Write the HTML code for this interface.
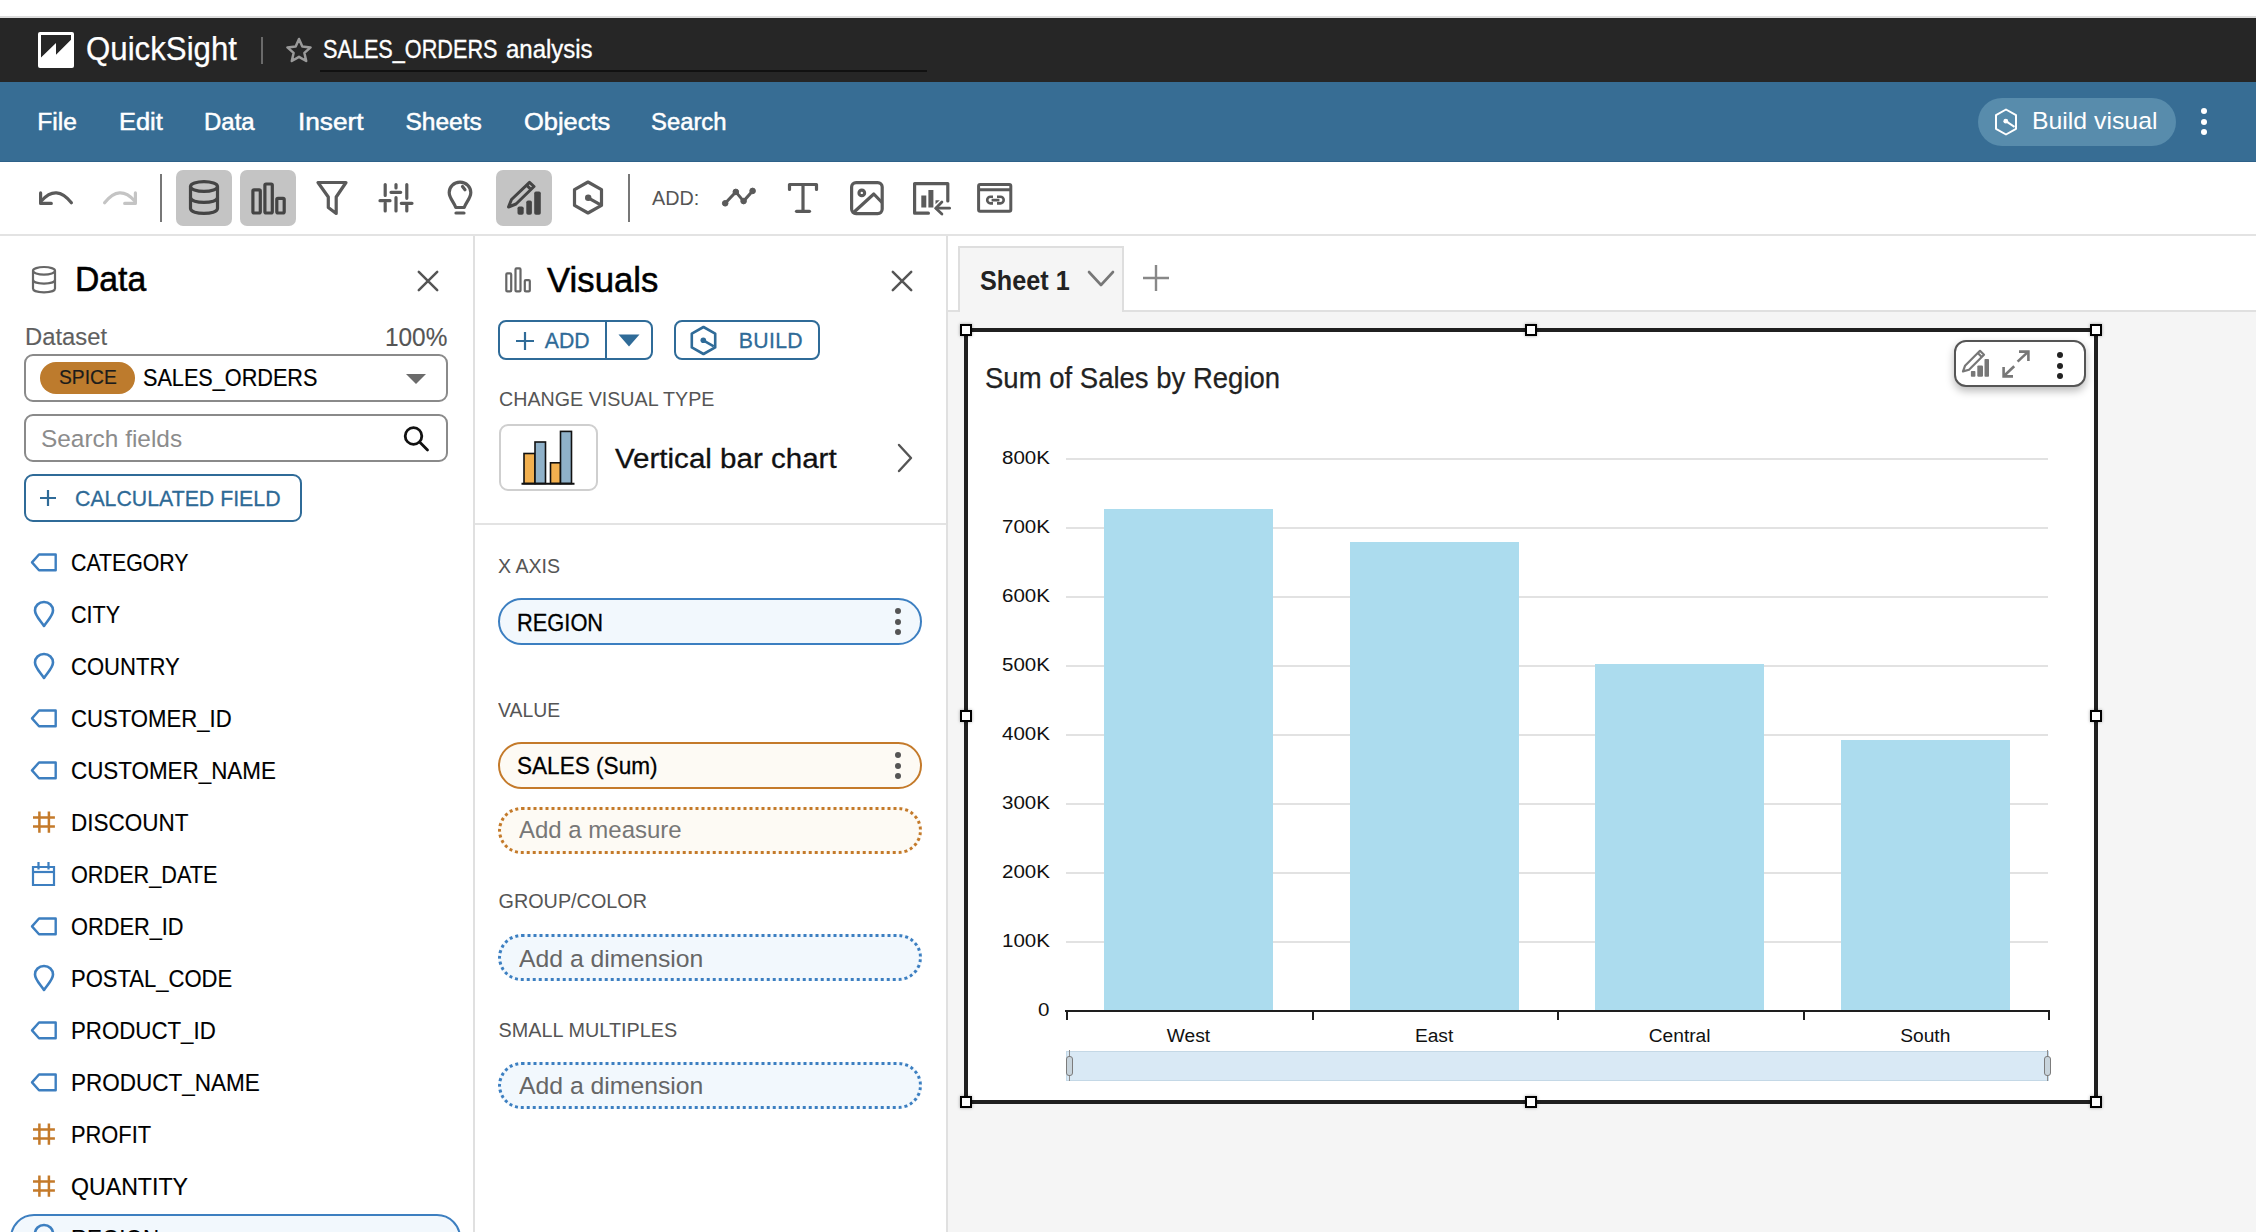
<!DOCTYPE html>
<html><head><meta charset="utf-8"><title>QuickSight</title>
<style>
html,body{margin:0;padding:0;}
body{width:2256px;height:1232px;overflow:hidden;position:relative;background:#fff;font-family:"Liberation Sans",sans-serif;}
.t{position:absolute;line-height:1;white-space:nowrap;transform-origin:0 50%;}
svg{overflow:visible}
</style></head><body>
<div style="position:absolute;left:0px;top:16px;width:2256px;height:2px;background:#dcdcdc"></div>
<div style="position:absolute;left:0px;top:18px;width:2256px;height:64px;background:#262626"></div>
<div style="position:absolute;left:0px;top:82px;width:2256px;height:80px;background:#376d94"></div>
<div style="position:absolute;left:0px;top:161px;width:2256px;height:1px;background:#2d6189"></div>
<div style="position:absolute;left:0px;top:234px;width:2256px;height:2px;background:#e3e3e3"></div>
<div style="position:absolute;left:473px;top:236px;width:2px;height:996px;background:#e0e0e0"></div>
<div style="position:absolute;left:946px;top:236px;width:2px;height:996px;background:#e0e0e0"></div>
<div style="position:absolute;left:475px;top:523px;width:471px;height:2px;background:#e3e3e3"></div>
<div style="position:absolute;left:948px;top:312px;width:1308px;height:920px;background:#f5f5f5"></div>
<div style="position:absolute;left:948px;top:310px;width:1308px;height:2px;background:#e0e0e0"></div>
<svg style="position:absolute;left:38px;top:32px;" width="36" height="36" viewBox="0 0 36 36"><rect x="0" y="0" width="36" height="36" rx="2" fill="#fff"/><path d="M3 3 H33 V7.8 L18 22.8 V11 L3 25.6 Z" fill="#262626"/></svg>
<div class="t" style="left:86.0px;top:32.3px;font-size:33.72px;color:#fff;-webkit-text-stroke:0.25px #fff;transform:scaleX(0.926);">QuickSight</div>
<div style="position:absolute;left:261px;top:37px;width:2px;height:27px;background:#6a6a6a"></div>
<svg style="position:absolute;left:285px;top:37px;" width="28" height="26" viewBox="0 0 28 26"><path d="M14 2 L17.3 9.6 L25.6 10.4 L19.4 15.9 L21.2 24 L14 19.8 L6.8 24 L8.6 15.9 L2.4 10.4 L10.7 9.6 Z" fill="none" stroke="#9a9a9a" stroke-width="2.5" stroke-linejoin="round"/></svg>
<div class="t" style="left:323.0px;top:37.2px;font-size:24.86px;color:#fff;-webkit-text-stroke:0.35px #fff;transform:scaleX(0.871);">SALES_ORDERS</div>
<div class="t" style="left:506.0px;top:37.2px;font-size:24.86px;color:#fff;-webkit-text-stroke:0.35px #fff;transform:scaleX(0.964);">analysis</div>
<div style="position:absolute;left:320px;top:70px;width:607px;height:2px;background:#111"></div>
<div class="t" style="left:37.3px;top:110.1px;font-size:24.56px;color:#fff;-webkit-text-stroke:0.5px #fff;">File</div>
<div class="t" style="left:118.5px;top:110.1px;font-size:24.56px;color:#fff;-webkit-text-stroke:0.5px #fff;transform:scaleX(1.035);">Edit</div>
<div class="t" style="left:204.4px;top:110.1px;font-size:24.56px;color:#fff;-webkit-text-stroke:0.5px #fff;transform:scaleX(0.977);">Data</div>
<div class="t" style="left:298.4px;top:110.1px;font-size:24.56px;color:#fff;-webkit-text-stroke:0.5px #fff;transform:scaleX(1.068);">Insert</div>
<div class="t" style="left:405.4px;top:110.1px;font-size:24.56px;color:#fff;-webkit-text-stroke:0.5px #fff;">Sheets</div>
<div class="t" style="left:523.7px;top:110.1px;font-size:24.56px;color:#fff;-webkit-text-stroke:0.5px #fff;transform:scaleX(1.036);">Objects</div>
<div class="t" style="left:651.0px;top:110.1px;font-size:24.56px;color:#fff;-webkit-text-stroke:0.5px #fff;transform:scaleX(0.971);">Search</div>
<div style="position:absolute;left:1978px;top:98px;width:198px;height:48px;background:#588cac;border-radius:24px"></div>
<svg style="position:absolute;left:1994px;top:108px;" width="24" height="28" viewBox="0 0 24 28"><path d="M12 1.5 L22 7.2 V20.8 L12 26.5 L2 20.8 V7.2 Z" fill="none" stroke="#fff" stroke-width="2" stroke-linejoin="round"/><circle cx="11.8" cy="13.2" r="2.4" fill="#fff"/><path d="M11.8 13.2 L20.5 18.8" stroke="#fff" stroke-width="2"/></svg>
<div class="t" style="left:2031.5px;top:109.7px;font-size:23.26px;color:#fff;transform:scaleX(1.067);">Build visual</div>
<div style="position:absolute;left:2201px;top:108px;width:6px;height:6px;background:#fff;border-radius:50%"></div>
<div style="position:absolute;left:2201px;top:118.8px;width:6px;height:6px;background:#fff;border-radius:50%"></div>
<div style="position:absolute;left:2201px;top:129.3px;width:6px;height:6px;background:#fff;border-radius:50%"></div>
<svg style="position:absolute;left:36px;top:188px;" width="40" height="20" viewBox="0 0 40 20"><path d="M4.6 4.9 V15.4 H15.3" fill="none" stroke="#5a5a5a" stroke-width="3.2" stroke-linecap="round" stroke-linejoin="round"/><path d="M5.5 12.8 Q 20.5 -4, 35.4 14.8" fill="none" stroke="#5a5a5a" stroke-width="3.2" stroke-linecap="round"/></svg>
<svg style="position:absolute;left:100px;top:188px;" width="40" height="20" viewBox="0 0 40 20"><g transform="translate(40,0) scale(-1,1)"><path d="M4.6 4.9 V15.4 H15.3" fill="none" stroke="#c4c4c4" stroke-width="3.2" stroke-linecap="round" stroke-linejoin="round"/><path d="M5.5 12.8 Q 20.5 -4, 35.4 14.8" fill="none" stroke="#c4c4c4" stroke-width="3.2" stroke-linecap="round"/></g></svg>
<div style="position:absolute;left:160px;top:174px;width:2px;height:48px;background:#777"></div>
<div style="position:absolute;left:176px;top:170px;width:56px;height:56px;background:#c4c4c4;border-radius:7px"></div>
<div style="position:absolute;left:240px;top:170px;width:56px;height:56px;background:#c4c4c4;border-radius:7px"></div>
<div style="position:absolute;left:496px;top:170px;width:56px;height:56px;background:#c4c4c4;border-radius:7px"></div>
<svg style="position:absolute;left:188px;top:180px;" width="32" height="36" viewBox="0 0 32 36"><g fill="none" stroke="#444" stroke-width="3.2"><ellipse cx="16" cy="6.5" rx="13.5" ry="4.8"/><path d="M2.5 6.5 V28.5 C2.5 35, 29.5 35, 29.5 28.5 V6.5"/><path d="M2.5 17.5 C2.5 24, 29.5 24, 29.5 17.5"/></g></svg>
<svg style="position:absolute;left:250px;top:180px;" width="36" height="36" viewBox="0 0 36 36"><g fill="none" stroke="#444" stroke-width="3.2" stroke-linejoin="round"><rect x="2.9" y="9.9" width="7.4" height="23.1" rx="1.2"/><rect x="14.9" y="4" width="7.4" height="29" rx="1.2"/><rect x="26.8" y="18.3" width="7.4" height="14.7" rx="1.2"/></g></svg>
<svg style="position:absolute;left:316px;top:180px;" width="32" height="36" viewBox="0 0 32 36"><path d="M2 2.5 H30 L20.2 17 V33.5 L12.3 27.5 V17 Z" fill="none" stroke="#5a5a5a" stroke-width="3.2" stroke-linejoin="round"/></svg>
<svg style="position:absolute;left:378px;top:182px;" width="36" height="32" viewBox="0 0 36 32"><g stroke="#5a5a5a" stroke-width="3.2" stroke-linecap="round"><path d="M7.2 2.5 V13.5 M7.2 21 V29 M2 18.7 H12"/><path d="M18 2.5 V6 M18 15.5 V29 M13 10.3 H22.7"/><path d="M28.8 2.5 V16.3 M28.8 23.5 V29 M23.3 21.3 H34"/></g></svg>
<svg style="position:absolute;left:446px;top:179px;" width="28" height="38" viewBox="0 0 28 38"><g fill="none" stroke="#5a5a5a" stroke-width="3.2" stroke-linecap="round" stroke-linejoin="round"><path d="M14 3.2 C 7.5 3.2, 3.2 8, 3.2 13.5 C 3.2 19, 8 23.5, 9.8 28.5 H18.2 C 20 23.5, 24.8 19, 24.8 13.5 C 24.8 8, 20.5 3.2, 14 3.2 Z"/><path d="M10 34 H18"/><path d="M16.5 7.5 L19 10.8"/></g></svg>
<svg style="position:absolute;left:506px;top:180px;" width="38" height="38" viewBox="0 0 38 38"><g fill="none" stroke="#444" stroke-width="3" stroke-linejoin="round"><path d="M2.5 27 L5.5 19.5 L23.5 2.3 L28 6.5 L10 24 Z"/><path d="M20.5 5.2 L25 9.5"/></g><g fill="#444"><rect x="11.5" y="26.5" width="6.2" height="8.2" rx="1.8"/><rect x="20.3" y="20.5" width="5.6" height="14.2" rx="1.8"/><rect x="28.2" y="11.5" width="6.6" height="23.2" rx="1.8"/></g></svg>
<svg style="position:absolute;left:572px;top:180px;" width="32" height="36" viewBox="0 0 32 36"><path d="M16 2 L29.5 9.6 V25.4 L16 33 L2.5 25.4 V9.6 Z" fill="none" stroke="#5a5a5a" stroke-width="3.2" stroke-linejoin="round"/><circle cx="16.2" cy="17.8" r="3.2" fill="#5a5a5a"/><path d="M16.2 17.8 L28.3 24.6" stroke="#5a5a5a" stroke-width="3.2"/></svg>
<div style="position:absolute;left:628px;top:174px;width:2px;height:48px;background:#777"></div>
<div class="t" style="left:652.0px;top:188.5px;font-size:19.77px;color:#555;">ADD:</div>
<svg style="position:absolute;left:720px;top:186px;" width="38" height="22" viewBox="0 0 38 22"><g stroke="#5a5a5a" fill="#5a5a5a"><path d="M5.2 17.3 L15.8 5.9 L23.6 15.1 L32.6 4.9" fill="none" stroke-width="3"/><circle cx="5.2" cy="17.3" r="2.8"/><circle cx="15.8" cy="5.9" r="2.8"/><circle cx="23.6" cy="15.1" r="2.8"/><circle cx="32.6" cy="4.9" r="2.8"/></g></svg>
<svg style="position:absolute;left:786px;top:181px;" width="34" height="34" viewBox="0 0 34 34"><g fill="none" stroke="#5a5a5a" stroke-width="3.2" stroke-linecap="round" stroke-linejoin="round"><path d="M3.5 8.5 V3.5 H30.5 V8.5"/><path d="M17 3.5 V30.3"/><path d="M10.5 30.3 H23.5"/></g></svg>
<svg style="position:absolute;left:849px;top:180px;" width="36" height="36" viewBox="0 0 36 36"><g fill="none" stroke="#5a5a5a" stroke-width="3.2" stroke-linejoin="round"><rect x="2.6" y="2.6" width="30.6" height="31" rx="4.5"/><circle cx="12.8" cy="12.9" r="2.8"/><path d="M4 33 L24.8 14 L33 22.5"/></g></svg>
<svg style="position:absolute;left:912px;top:181px;" width="40" height="36" viewBox="0 0 40 36"><g fill="none" stroke="#5a5a5a" stroke-width="3.2" stroke-linejoin="round" stroke-linecap="round"><path d="M16.4 32.2 H2.6 V2.6 H35.8 V20"/><path d="M24 27.2 H37.6" stroke-width="2.8"/><path d="M29.9 21 L23.8 27.2 L29.9 33" stroke-width="2.8"/></g><g fill="#5a5a5a"><rect x="9.3" y="14.5" width="5" height="12"/><rect x="16.4" y="9" width="5" height="17.5"/><path d="M23.5 19.2 L27.8 19.2 L23.5 23.2 Z"/></g></svg>
<svg style="position:absolute;left:976px;top:182px;" width="38" height="32" viewBox="0 0 38 32"><g fill="none" stroke="#5a5a5a" stroke-width="3" stroke-linejoin="round"><rect x="2.6" y="2.6" width="32.2" height="26.6" rx="1.5"/><path d="M2.6 7.8 H34.8"/><path d="M17 14.8 H14.5 A3.3 3.3 0 0 0 14.5 21.4 H17 M21 14.8 H24.4 A3.3 3.3 0 0 1 24.4 21.4 H21 M15.6 18.1 H23.4" stroke-width="2.6"/></g></svg>
<svg style="position:absolute;left:31px;top:265px;" width="26" height="30" viewBox="0 0 26 30"><g fill="none" stroke="#666" stroke-width="2.2"><ellipse cx="13" cy="5.8" rx="11" ry="3.8"/><path d="M2 5.8 V23.5 C2 28.6, 24 28.6, 24 23.5 V5.8"/><path d="M2 14.7 C2 19.8, 24 19.8, 24 14.7"/></g></svg>
<div class="t" style="left:75.0px;top:262.3px;font-size:35.76px;color:#000;-webkit-text-stroke:0.55px #000;transform:scaleX(0.943);">Data</div>
<svg style="position:absolute;left:414px;top:267px;" width="28" height="28" viewBox="0 0 28 28"><path d="M4.8 4.8 L23.2 23.2 M23.2 4.8 L4.8 23.2" stroke="#555" stroke-width="2.5" stroke-linecap="round"/></svg>
<div class="t" style="left:25.2px;top:325.9px;font-size:23.11px;color:#5f5f5f;-webkit-text-stroke:0.15px #5f5f5f;transform:scaleX(1.030);">Dataset</div>
<div class="t" style="left:385.0px;top:325.0px;font-size:24.86px;color:#555;-webkit-text-stroke:0.15px #555;transform:scaleX(0.980);">100%</div>
<div style="position:absolute;left:24px;top:354px;width:424px;height:48px;box-sizing:border-box;border:2px solid #8a8a8a;border-radius:9px;background:#fff"></div>
<div style="position:absolute;left:40px;top:362px;width:95px;height:32px;background:#bd7b2d;border-radius:16px"></div>
<div class="t" style="left:58.7px;top:367.1px;font-size:20.93px;color:#1b1b1b;-webkit-text-stroke:0.2px #1b1b1b;transform:scaleX(0.919);">SPICE</div>
<div class="t" style="left:143.4px;top:365.5px;font-size:24.13px;color:#000;-webkit-text-stroke:0.2px #000;transform:scaleX(0.897);">SALES_ORDERS</div>
<svg style="position:absolute;left:404px;top:372px;" width="24" height="14" viewBox="0 0 24 14"><path d="M2 2 H22 L12 12 Z" fill="#6b6b6b"/></svg>
<div style="position:absolute;left:24px;top:414px;width:424px;height:48px;box-sizing:border-box;border:2px solid #8a8a8a;border-radius:9px;background:#fff"></div>
<div class="t" style="left:40.5px;top:426.6px;font-size:24.13px;color:#8c8c8c;transform:scaleX(1.012);">Search fields</div>
<svg style="position:absolute;left:402px;top:424px;" width="28" height="30" viewBox="0 0 28 30"><g fill="none" stroke="#111" stroke-width="2.8" stroke-linecap="round"><circle cx="11.5" cy="12" r="8.3"/><path d="M17.6 18.1 L25.5 26"/></g></svg>
<div style="position:absolute;left:24px;top:474px;width:278px;height:48px;box-sizing:border-box;border:2px solid #2f6b98;border-radius:9px;background:#fff"></div>
<svg style="position:absolute;left:38px;top:488px;" width="20" height="20" viewBox="0 0 20 20"><path d="M10 2 V18 M2 10 H18" stroke="#2f6b98" stroke-width="2.2"/></svg>
<div class="t" style="left:75.0px;top:487.0px;font-size:22.67px;color:#2e6a96;-webkit-text-stroke:0.3px #2e6a96;transform:scaleX(0.940);">CALCULATED FIELD</div>
<svg style="position:absolute;left:30px;top:551.7px;" width="28" height="22" viewBox="0 0 28 22"><path d="M9 2.5 H25.7 V18.3 H9 L2 10.4 Z" fill="none" stroke="#3d7fc0" stroke-width="2.4" stroke-linejoin="round"/></svg>
<div class="t" style="left:71.2px;top:550.8px;font-size:24.13px;color:#000;-webkit-text-stroke:0.15px #000;transform:scaleX(0.883);">CATEGORY</div>
<svg style="position:absolute;left:33px;top:599.7px;" width="22" height="30" viewBox="0 0 22 30"><path d="M11 2 C 5.8 2, 2 5.8, 2 10.4 C 2 15.5, 7.5 20.5, 11 26 C 14.5 20.5, 20 15.5, 20 10.4 C 20 5.8, 16.2 2, 11 2 Z" fill="none" stroke="#3d7fc0" stroke-width="2.6" stroke-linejoin="round"/></svg>
<div class="t" style="left:71.2px;top:602.8px;font-size:24.13px;color:#000;-webkit-text-stroke:0.15px #000;transform:scaleX(0.892);">CITY</div>
<svg style="position:absolute;left:33px;top:651.7px;" width="22" height="30" viewBox="0 0 22 30"><path d="M11 2 C 5.8 2, 2 5.8, 2 10.4 C 2 15.5, 7.5 20.5, 11 26 C 14.5 20.5, 20 15.5, 20 10.4 C 20 5.8, 16.2 2, 11 2 Z" fill="none" stroke="#3d7fc0" stroke-width="2.6" stroke-linejoin="round"/></svg>
<div class="t" style="left:71.2px;top:654.8px;font-size:24.13px;color:#000;-webkit-text-stroke:0.15px #000;transform:scaleX(0.914);">COUNTRY</div>
<svg style="position:absolute;left:30px;top:707.7px;" width="28" height="22" viewBox="0 0 28 22"><path d="M9 2.5 H25.7 V18.3 H9 L2 10.4 Z" fill="none" stroke="#3d7fc0" stroke-width="2.4" stroke-linejoin="round"/></svg>
<div class="t" style="left:71.2px;top:706.8px;font-size:24.13px;color:#000;-webkit-text-stroke:0.15px #000;transform:scaleX(0.917);">CUSTOMER_ID</div>
<svg style="position:absolute;left:30px;top:759.7px;" width="28" height="22" viewBox="0 0 28 22"><path d="M9 2.5 H25.7 V18.3 H9 L2 10.4 Z" fill="none" stroke="#3d7fc0" stroke-width="2.4" stroke-linejoin="round"/></svg>
<div class="t" style="left:71.2px;top:758.8px;font-size:24.13px;color:#000;-webkit-text-stroke:0.15px #000;transform:scaleX(0.928);">CUSTOMER_NAME</div>
<svg style="position:absolute;left:32px;top:811.9000000000001px;" width="24" height="22" viewBox="0 0 24 22"><path d="M7.4 -0.5 V20.8 M16.9 -0.5 V20.8 M1 5.5 H22.9 M1 14.4 H22.9" stroke="#c47a2a" stroke-width="2.5"/></svg>
<div class="t" style="left:71.2px;top:810.8px;font-size:24.13px;color:#000;-webkit-text-stroke:0.15px #000;transform:scaleX(0.932);">DISCOUNT</div>
<svg style="position:absolute;left:31px;top:861.2px;" width="26" height="26" viewBox="0 0 26 26"><g fill="none" stroke="#3d7fc0" stroke-width="2.2"><path d="M2 6 H23 V24 H2 Z"/><path d="M2 11 H23"/><path d="M7.5 1 V8.5 M17.5 1 V8.5"/></g></svg>
<div class="t" style="left:71.2px;top:862.8px;font-size:24.13px;color:#000;-webkit-text-stroke:0.15px #000;transform:scaleX(0.898);">ORDER_DATE</div>
<svg style="position:absolute;left:30px;top:915.7px;" width="28" height="22" viewBox="0 0 28 22"><path d="M9 2.5 H25.7 V18.3 H9 L2 10.4 Z" fill="none" stroke="#3d7fc0" stroke-width="2.4" stroke-linejoin="round"/></svg>
<div class="t" style="left:71.2px;top:914.8px;font-size:24.13px;color:#000;-webkit-text-stroke:0.15px #000;transform:scaleX(0.903);">ORDER_ID</div>
<svg style="position:absolute;left:33px;top:963.7px;" width="22" height="30" viewBox="0 0 22 30"><path d="M11 2 C 5.8 2, 2 5.8, 2 10.4 C 2 15.5, 7.5 20.5, 11 26 C 14.5 20.5, 20 15.5, 20 10.4 C 20 5.8, 16.2 2, 11 2 Z" fill="none" stroke="#3d7fc0" stroke-width="2.6" stroke-linejoin="round"/></svg>
<div class="t" style="left:71.2px;top:966.8px;font-size:24.13px;color:#000;-webkit-text-stroke:0.15px #000;transform:scaleX(0.913);">POSTAL_CODE</div>
<svg style="position:absolute;left:30px;top:1019.7px;" width="28" height="22" viewBox="0 0 28 22"><path d="M9 2.5 H25.7 V18.3 H9 L2 10.4 Z" fill="none" stroke="#3d7fc0" stroke-width="2.4" stroke-linejoin="round"/></svg>
<div class="t" style="left:71.2px;top:1018.8px;font-size:24.13px;color:#000;-webkit-text-stroke:0.15px #000;transform:scaleX(0.923);">PRODUCT_ID</div>
<svg style="position:absolute;left:30px;top:1071.7px;" width="28" height="22" viewBox="0 0 28 22"><path d="M9 2.5 H25.7 V18.3 H9 L2 10.4 Z" fill="none" stroke="#3d7fc0" stroke-width="2.4" stroke-linejoin="round"/></svg>
<div class="t" style="left:71.2px;top:1070.8px;font-size:24.13px;color:#000;-webkit-text-stroke:0.15px #000;transform:scaleX(0.933);">PRODUCT_NAME</div>
<svg style="position:absolute;left:32px;top:1123.9px;" width="24" height="22" viewBox="0 0 24 22"><path d="M7.4 -0.5 V20.8 M16.9 -0.5 V20.8 M1 5.5 H22.9 M1 14.4 H22.9" stroke="#c47a2a" stroke-width="2.5"/></svg>
<div class="t" style="left:71.2px;top:1122.8px;font-size:24.13px;color:#000;-webkit-text-stroke:0.15px #000;transform:scaleX(0.905);">PROFIT</div>
<svg style="position:absolute;left:32px;top:1175.9px;" width="24" height="22" viewBox="0 0 24 22"><path d="M7.4 -0.5 V20.8 M16.9 -0.5 V20.8 M1 5.5 H22.9 M1 14.4 H22.9" stroke="#c47a2a" stroke-width="2.5"/></svg>
<div class="t" style="left:71.2px;top:1174.8px;font-size:24.13px;color:#000;-webkit-text-stroke:0.15px #000;transform:scaleX(0.959);">QUANTITY</div>
<div style="position:absolute;left:10px;top:1214px;width:451px;height:60px;box-sizing:border-box;border:2px solid #3d7fc0;border-radius:24px;background:#f2f8fd"></div>
<svg style="position:absolute;left:33px;top:1223px;" width="22" height="30" viewBox="0 0 22 30"><path d="M11 2 C 5.8 2, 2 5.8, 2 10.4 C 2 15.5, 7.5 20.5, 11 26 C 14.5 20.5, 20 15.5, 20 10.4 C 20 5.8, 16.2 2, 11 2 Z" fill="none" stroke="#3d7fc0" stroke-width="2.6" stroke-linejoin="round"/></svg>
<div class="t" style="left:71.2px;top:1226.6px;font-size:24.13px;color:#000;-webkit-text-stroke:0.15px #000;transform:scaleX(0.925);">REGION</div>
<svg style="position:absolute;left:503px;top:265px;" width="30" height="30" viewBox="0 0 30 30"><g fill="none" stroke="#666" stroke-width="2.2"><rect x="3.3" y="8.4" width="4.9" height="18" rx="1"/><rect x="12.5" y="3.4" width="5" height="23" rx="1"/><rect x="21.8" y="15.1" width="5" height="11.3" rx="1"/></g></svg>
<div class="t" style="left:546.8px;top:262.5px;font-size:35.76px;color:#000;-webkit-text-stroke:0.55px #000;transform:scaleX(0.972);">Visuals</div>
<svg style="position:absolute;left:888px;top:267px;" width="28" height="28" viewBox="0 0 28 28"><path d="M4.8 4.8 L23.2 23.2 M23.2 4.8 L4.8 23.2" stroke="#555" stroke-width="2.5" stroke-linecap="round"/></svg>
<div style="position:absolute;left:498px;top:320px;width:155px;height:40px;box-sizing:border-box;border:2px solid #2f6b98;border-radius:8px;background:#fff"></div>
<div style="position:absolute;left:605px;top:320px;width:2px;height:40px;background:#2f6b98"></div>
<svg style="position:absolute;left:514px;top:330px;" width="22" height="22" viewBox="0 0 22 22"><path d="M11 2 V20 M2 11 H20" stroke="#2f6b98" stroke-width="2.2"/></svg>
<div class="t" style="left:544.8px;top:329.8px;font-size:21.22px;color:#2f6b98;-webkit-text-stroke:0.3px #2f6b98;">ADD</div>
<svg style="position:absolute;left:617px;top:333px;" width="24" height="15" viewBox="0 0 24 15"><path d="M1.5 1.5 H22.5 L12 13.5 Z" fill="#2f6b98"/></svg>
<div style="position:absolute;left:674px;top:320px;width:146px;height:40px;box-sizing:border-box;border:2px solid #2f6b98;border-radius:8px;background:#fff"></div>
<svg style="position:absolute;left:689px;top:325px;" width="30" height="32" viewBox="0 0 30 32"><path d="M14.5 2 L26.2 8.6 V22.4 L14.5 29 L2.8 22.4 V8.6 Z" fill="none" stroke="#2f6b98" stroke-width="2.6" stroke-linejoin="round"/><circle cx="14.3" cy="15.3" r="2.8" fill="#2f6b98"/><path d="M14.3 15.3 L24.8 21.4" stroke="#2f6b98" stroke-width="2.6"/></svg>
<div class="t" style="left:738.8px;top:329.8px;font-size:21.22px;color:#2f6b98;letter-spacing:0.35px;-webkit-text-stroke:0.3px #2f6b98;">BUILD</div>
<div class="t" style="left:499.0px;top:389.0px;font-size:20.35px;color:#555;transform:scaleX(0.967);">CHANGE VISUAL TYPE</div>
<div style="position:absolute;left:499px;top:424px;width:99px;height:67px;box-sizing:border-box;border:2px solid #cfcfcf;border-radius:9px;background:#fff"></div>
<svg style="position:absolute;left:520px;top:428px;" width="58" height="60" viewBox="0 0 58 60"><g stroke="#111" stroke-width="1.6"><rect x="4" y="25.5" width="11" height="30" fill="#f2b04f"/><rect x="15" y="14" width="10.5" height="41.5" fill="#8fb1c9"/><rect x="30.5" y="34.8" width="10" height="20.7" fill="#f2b04f"/><rect x="40.5" y="3.4" width="11" height="52.1" fill="#8fb1c9"/><path d="M1.5 55.7 H54.5" stroke-width="2"/></g></svg>
<div class="t" style="left:614.7px;top:444.5px;font-size:27.62px;color:#111;-webkit-text-stroke:0.3px #111;transform:scaleX(1.070);">Vertical bar chart</div>
<svg style="position:absolute;left:894px;top:442px;" width="22" height="32" viewBox="0 0 22 32"><path d="M5 3 L17 16 L5 29" fill="none" stroke="#555" stroke-width="2.4" stroke-linecap="round" stroke-linejoin="round"/></svg>
<div class="t" style="left:498.4px;top:556.5px;font-size:19.77px;color:#555;transform:scaleX(0.990);">X AXIS</div>
<div style="position:absolute;left:498px;top:598px;width:424px;height:47px;box-sizing:border-box;border:2px solid #3c7fc1;border-radius:24px;background:#f2f8fd"></div>
<div class="t" style="left:516.9px;top:610.5px;font-size:24.13px;color:#000;-webkit-text-stroke:0.3px #000;transform:scaleX(0.905);">REGION</div>
<div style="position:absolute;left:894.6px;top:608px;width:6px;height:6px;background:#555;border-radius:50%"></div>
<div style="position:absolute;left:894.6px;top:618.5px;width:6px;height:6px;background:#555;border-radius:50%"></div>
<div style="position:absolute;left:894.6px;top:628.7px;width:6px;height:6px;background:#555;border-radius:50%"></div>
<div class="t" style="left:498.0px;top:700.8px;font-size:19.77px;color:#555;transform:scaleX(0.980);">VALUE</div>
<div style="position:absolute;left:498px;top:742px;width:424px;height:47px;box-sizing:border-box;border:2px solid #c47a2a;border-radius:24px;background:#fdfaf4"></div>
<div class="t" style="left:516.9px;top:753.9px;font-size:24.13px;color:#000;-webkit-text-stroke:0.3px #000;transform:scaleX(0.936);">SALES (Sum)</div>
<div style="position:absolute;left:894.6px;top:752px;width:6px;height:6px;background:#555;border-radius:50%"></div>
<div style="position:absolute;left:894.6px;top:762.5px;width:6px;height:6px;background:#555;border-radius:50%"></div>
<div style="position:absolute;left:894.6px;top:772.7px;width:6px;height:6px;background:#555;border-radius:50%"></div>
<div style="position:absolute;left:498px;top:807px;width:424px;height:47px;box-sizing:border-box;border:3px dotted #c47a2a;border-radius:24px;background:#fdfaf4"></div>
<div class="t" style="left:518.9px;top:817.8px;font-size:24.13px;color:#777;transform:scaleX(0.994);">Add a measure</div>
<div class="t" style="left:498.5px;top:892.3px;font-size:19.77px;color:#555;letter-spacing:0.02px;">GROUP/COLOR</div>
<div style="position:absolute;left:498px;top:934px;width:424px;height:47px;box-sizing:border-box;border:3px dotted #3c7fc1;border-radius:24px;background:#f2f8fd"></div>
<div class="t" style="left:518.5px;top:946.6px;font-size:24.13px;color:#666;transform:scaleX(1.026);">Add a dimension</div>
<div class="t" style="left:498.5px;top:1020.7px;font-size:19.77px;color:#555;letter-spacing:0.06px;">SMALL MULTIPLES</div>
<div style="position:absolute;left:498px;top:1062px;width:424px;height:47px;box-sizing:border-box;border:3px dotted #3c7fc1;border-radius:24px;background:#f2f8fd"></div>
<div class="t" style="left:518.5px;top:1074.3px;font-size:24.13px;color:#666;transform:scaleX(1.026);">Add a dimension</div>
<div style="position:absolute;left:958px;top:246px;width:166px;height:66px;box-sizing:border-box;border:2px solid #dedede;border-bottom:none;background:#f5f5f5"></div>
<div class="t" style="left:980.2px;top:268.1px;font-size:27.04px;color:#222;font-weight:700;transform:scaleX(0.933);">Sheet 1</div>
<svg style="position:absolute;left:1086px;top:268px;" width="32" height="22" viewBox="0 0 32 22"><path d="M3 4 L15 17 L27 4" fill="none" stroke="#777" stroke-width="2.6" stroke-linecap="round" stroke-linejoin="round"/></svg>
<svg style="position:absolute;left:1141px;top:263px;" width="30" height="30" viewBox="0 0 30 30"><path d="M15 2 V28 M2 15 H28" stroke="#888" stroke-width="2.4"/></svg>
<div style="position:absolute;left:964px;top:328px;width:1134px;height:776px;box-sizing:border-box;border:4px solid #202020;background:#fff"></div>
<div style="position:absolute;left:960px;top:324px;width:12px;height:12px;box-sizing:border-box;border:2px solid #000;background:#fff;box-shadow:0 0 3px rgba(0,0,0,0.35)"></div>
<div style="position:absolute;left:960px;top:710px;width:12px;height:12px;box-sizing:border-box;border:2px solid #000;background:#fff;box-shadow:0 0 3px rgba(0,0,0,0.35)"></div>
<div style="position:absolute;left:960px;top:1096px;width:12px;height:12px;box-sizing:border-box;border:2px solid #000;background:#fff;box-shadow:0 0 3px rgba(0,0,0,0.35)"></div>
<div style="position:absolute;left:1525px;top:324px;width:12px;height:12px;box-sizing:border-box;border:2px solid #000;background:#fff;box-shadow:0 0 3px rgba(0,0,0,0.35)"></div>
<div style="position:absolute;left:1525px;top:1096px;width:12px;height:12px;box-sizing:border-box;border:2px solid #000;background:#fff;box-shadow:0 0 3px rgba(0,0,0,0.35)"></div>
<div style="position:absolute;left:2090px;top:324px;width:12px;height:12px;box-sizing:border-box;border:2px solid #000;background:#fff;box-shadow:0 0 3px rgba(0,0,0,0.35)"></div>
<div style="position:absolute;left:2090px;top:710px;width:12px;height:12px;box-sizing:border-box;border:2px solid #000;background:#fff;box-shadow:0 0 3px rgba(0,0,0,0.35)"></div>
<div style="position:absolute;left:2090px;top:1096px;width:12px;height:12px;box-sizing:border-box;border:2px solid #000;background:#fff;box-shadow:0 0 3px rgba(0,0,0,0.35)"></div>
<div class="t" style="left:985.0px;top:362.7px;font-size:29.36px;color:#222;-webkit-text-stroke:0.25px #222;transform:scaleX(0.937);">Sum of Sales by Region</div>
<div style="position:absolute;left:1066px;top:940.7px;width:982px;height:2px;background:#e2e2e2"></div>
<div style="position:absolute;left:1066px;top:871.7px;width:982px;height:2px;background:#e2e2e2"></div>
<div style="position:absolute;left:1066px;top:802.7px;width:982px;height:2px;background:#e2e2e2"></div>
<div style="position:absolute;left:1066px;top:733.7px;width:982px;height:2px;background:#e2e2e2"></div>
<div style="position:absolute;left:1066px;top:664.7px;width:982px;height:2px;background:#e2e2e2"></div>
<div style="position:absolute;left:1066px;top:595.7px;width:982px;height:2px;background:#e2e2e2"></div>
<div style="position:absolute;left:1066px;top:526.7px;width:982px;height:2px;background:#e2e2e2"></div>
<div style="position:absolute;left:1066px;top:457.7px;width:982px;height:2px;background:#e2e2e2"></div>
<div class="t" style="left:1038.1px;top:999.6px;font-size:19.19px;color:#111;transform:scaleX(1.070);">0</div>
<div class="t" style="left:1001.6px;top:930.6px;font-size:19.19px;color:#111;transform:scaleX(1.070);">100K</div>
<div class="t" style="left:1001.6px;top:861.6px;font-size:19.19px;color:#111;transform:scaleX(1.070);">200K</div>
<div class="t" style="left:1001.6px;top:792.6px;font-size:19.19px;color:#111;transform:scaleX(1.070);">300K</div>
<div class="t" style="left:1001.6px;top:723.6px;font-size:19.19px;color:#111;transform:scaleX(1.070);">400K</div>
<div class="t" style="left:1001.6px;top:654.6px;font-size:19.19px;color:#111;transform:scaleX(1.070);">500K</div>
<div class="t" style="left:1001.6px;top:585.6px;font-size:19.19px;color:#111;transform:scaleX(1.070);">600K</div>
<div class="t" style="left:1001.6px;top:516.6px;font-size:19.19px;color:#111;transform:scaleX(1.070);">700K</div>
<div class="t" style="left:1001.6px;top:447.6px;font-size:19.19px;color:#111;transform:scaleX(1.070);">800K</div>
<div style="position:absolute;left:1104px;top:509.4px;width:169.3px;height:501.3px;background:#acdcee"></div>
<div class="t" style="left:1166.8px;top:1025.6px;font-size:19.19px;color:#111;">West</div>
<div style="position:absolute;left:1349.5px;top:541.5px;width:169.1px;height:469.2px;background:#acdcee"></div>
<div class="t" style="left:1414.9px;top:1025.6px;font-size:19.19px;color:#111;">East</div>
<div style="position:absolute;left:1595px;top:664px;width:169.3px;height:346.7px;background:#acdcee"></div>
<div class="t" style="left:1648.7px;top:1025.6px;font-size:19.19px;color:#111;">Central</div>
<div style="position:absolute;left:1840.5px;top:739.8px;width:169.5px;height:270.9px;background:#acdcee"></div>
<div class="t" style="left:1900.2px;top:1025.6px;font-size:19.19px;color:#111;">South</div>
<div style="position:absolute;left:1065px;top:1009.7px;width:985px;height:2px;background:#1e1e1e"></div>
<div style="position:absolute;left:1066.3px;top:1010px;width:2px;height:10px;background:#1e1e1e"></div>
<div style="position:absolute;left:1311.7px;top:1010px;width:2px;height:10px;background:#1e1e1e"></div>
<div style="position:absolute;left:1557.1px;top:1010px;width:2px;height:10px;background:#1e1e1e"></div>
<div style="position:absolute;left:1802.5px;top:1010px;width:2px;height:10px;background:#1e1e1e"></div>
<div style="position:absolute;left:2047.9px;top:1010px;width:2px;height:10px;background:#1e1e1e"></div>
<div style="position:absolute;left:1066px;top:1050.5px;width:983px;height:30px;box-sizing:border-box;border:1px solid #c4d8e6;background:#d9e9f5"></div>
<div style="position:absolute;left:1068.9px;top:1050px;width:1.2px;height:31px;background:#8d8d8d"></div>
<div style="position:absolute;left:1065.8px;top:1055.5px;width:7.4px;height:20px;box-sizing:border-box;border:1.8px solid #7c7c7c;border-radius:3px;background:#c8d4dc"></div>
<div style="position:absolute;left:2046.9px;top:1050px;width:1.2px;height:31px;background:#8d8d8d"></div>
<div style="position:absolute;left:2043.8px;top:1055.5px;width:7.4px;height:20px;box-sizing:border-box;border:1.8px solid #7c7c7c;border-radius:3px;background:#c8d4dc"></div>
<div style="position:absolute;left:1954px;top:340px;width:132px;height:47px;box-sizing:border-box;border:2px solid #555;border-radius:12px;background:#fff;box-shadow:0 4px 9px rgba(0,0,0,0.28)"></div>
<svg style="position:absolute;left:1961px;top:349px;" width="30" height="30" viewBox="0 0 30 30"><g fill="none" stroke="#777" stroke-width="2.2" stroke-linejoin="round"><path d="M2 22.4 L4 16.8 L19 1.8 L23 5.8 L8 20.8 Z"/><path d="M16.8 4 L20.8 8"/></g><g fill="#777"><rect x="9.9" y="22" width="4.5" height="5.7" rx="0.8"/><rect x="16.3" y="16.4" width="5.7" height="11.3" rx="1.2"/><rect x="23.5" y="10" width="4.5" height="17.7" rx="0.8"/></g></svg>
<svg style="position:absolute;left:2001px;top:349px;" width="30" height="30" viewBox="0 0 30 30"><g fill="none" stroke="#777" stroke-width="2.6" stroke-linejoin="miter"><path d="M16.6 12.6 L27 2.9"/><path d="M18 2.6 H27.4 V12"/><path d="M13.2 17.2 L2.9 27"/><path d="M2.6 18 V27.4 H12"/></g></svg>
<div style="position:absolute;left:2057px;top:352.3px;width:6px;height:6px;background:#222;border-radius:50%"></div>
<div style="position:absolute;left:2057px;top:362.8px;width:6px;height:6px;background:#222;border-radius:50%"></div>
<div style="position:absolute;left:2057px;top:373px;width:6px;height:6px;background:#222;border-radius:50%"></div>
</body></html>
